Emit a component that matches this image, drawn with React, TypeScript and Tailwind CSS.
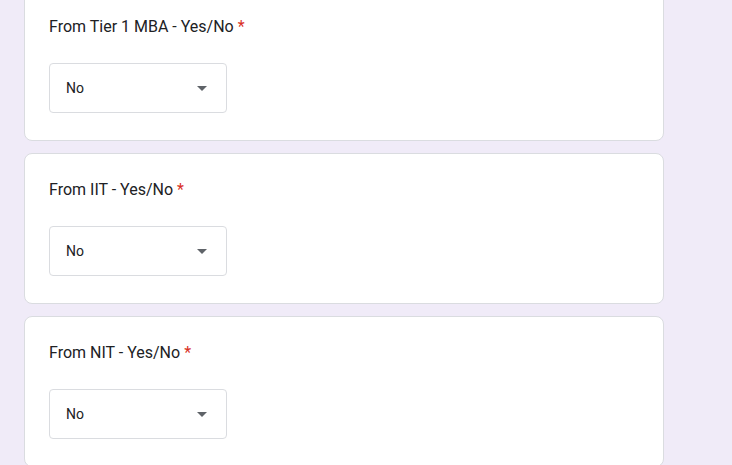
const QUESTIONS = [
  "From Tier 1 MBA - Yes/No",
  "From IIT - Yes/No",
  "From NIT - Yes/No",
];

function Dropdown({ value }: { value: string }) {
  return (
    <div className="flex h-[50px] w-[178px] items-center justify-between rounded-[4px] border border-[#dadce0] bg-white pl-4 pr-[19px]">
      <span className="text-[14px] text-[#202124]">{value}</span>
      <svg width="10" height="5" viewBox="0 0 10 5">
        <path d="M0 0 L5 5 L10 0 Z" fill="#5f6368" />
      </svg>
    </div>
  );
}

function QuestionCard({ title }: { title: string }) {
  return (
    <div className="w-[640px] rounded-[8px] border border-[#dadce0] bg-white px-6 pt-6 pb-[27px]">
      <div className="text-[16px] leading-6 text-[#202124]">
        {title}
        <span className="ml-1 text-[#d93025]">*</span>
      </div>
      <div className="mt-6">
        <Dropdown value="No" />
      </div>
    </div>
  );
}

export default function App() {
  return (
    <div
      className="h-[465px] w-[732px] overflow-hidden bg-[#f0ebf8]"
      style={{ fontFamily: "Roboto, 'Liberation Sans', sans-serif" }}
    >
      <div className="mt-[-10px] flex flex-col gap-3 pl-6">
        {QUESTIONS.map((q) => (
          <QuestionCard key={q} title={q} />
        ))}
      </div>
    </div>
  );
}
